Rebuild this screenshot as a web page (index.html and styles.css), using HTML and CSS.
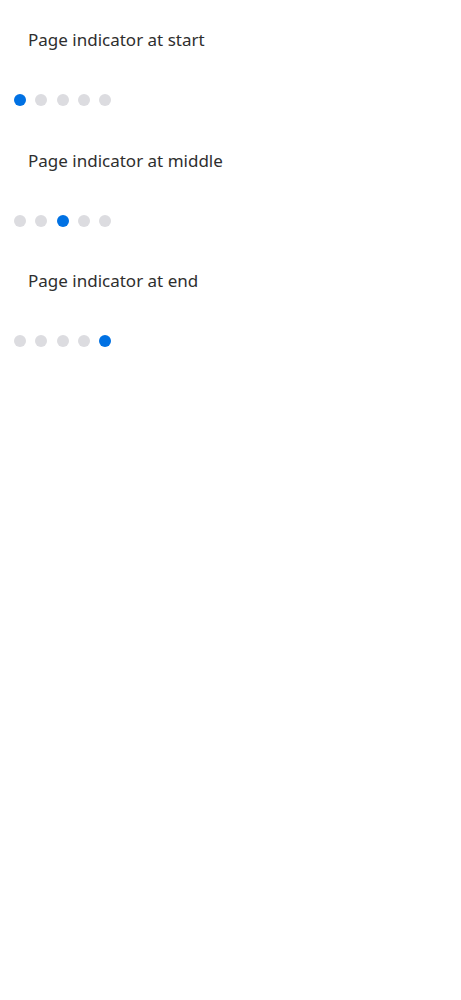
FILE: index.html
```html
<!DOCTYPE html>
<html>
<head>
<meta charset="utf-8">
<link rel="stylesheet" href="styles.css">
</head>
<body>
<div class="page">
  <section class="demo">
    <div class="title">Page indicator at start</div>
    <div class="dots">
      <span class="dot active"></span><span class="dot"></span><span class="dot"></span><span class="dot"></span><span class="dot"></span>
    </div>
  </section>
  <section class="demo">
    <div class="title">Page indicator at middle</div>
    <div class="dots">
      <span class="dot"></span><span class="dot"></span><span class="dot active"></span><span class="dot"></span><span class="dot"></span>
    </div>
  </section>
  <section class="demo">
    <div class="title">Page indicator at end</div>
    <div class="dots">
      <span class="dot"></span><span class="dot"></span><span class="dot"></span><span class="dot"></span><span class="dot active"></span>
    </div>
  </section>
</div>
</body>
</html>
```
FILE: styles.css
```css
html, body {
  margin: 0;
  padding: 0;
  background: #ffffff;
}
.page {
  font-family: "Noto Sans", "Open Sans", sans-serif;
  color: #2e2e2e;
  padding: 26px 14px 0 14px;
  display: flex;
  flex-direction: column;
}
.demo {
  display: flex;
  flex-direction: column;
  height: 120.5px;
}
.title {
  font-size: 17px;
  line-height: 28px;
  padding-left: 14px;
  height: 28px;
}
.dots {
  display: flex;
  gap: 9.33px;
  margin-top: 40px;
}
.dot {
  width: 12px;
  height: 12px;
  border-radius: 50%;
  background: #dcdce0;
}
.dot.active {
  background: #0071e3;
}
```
